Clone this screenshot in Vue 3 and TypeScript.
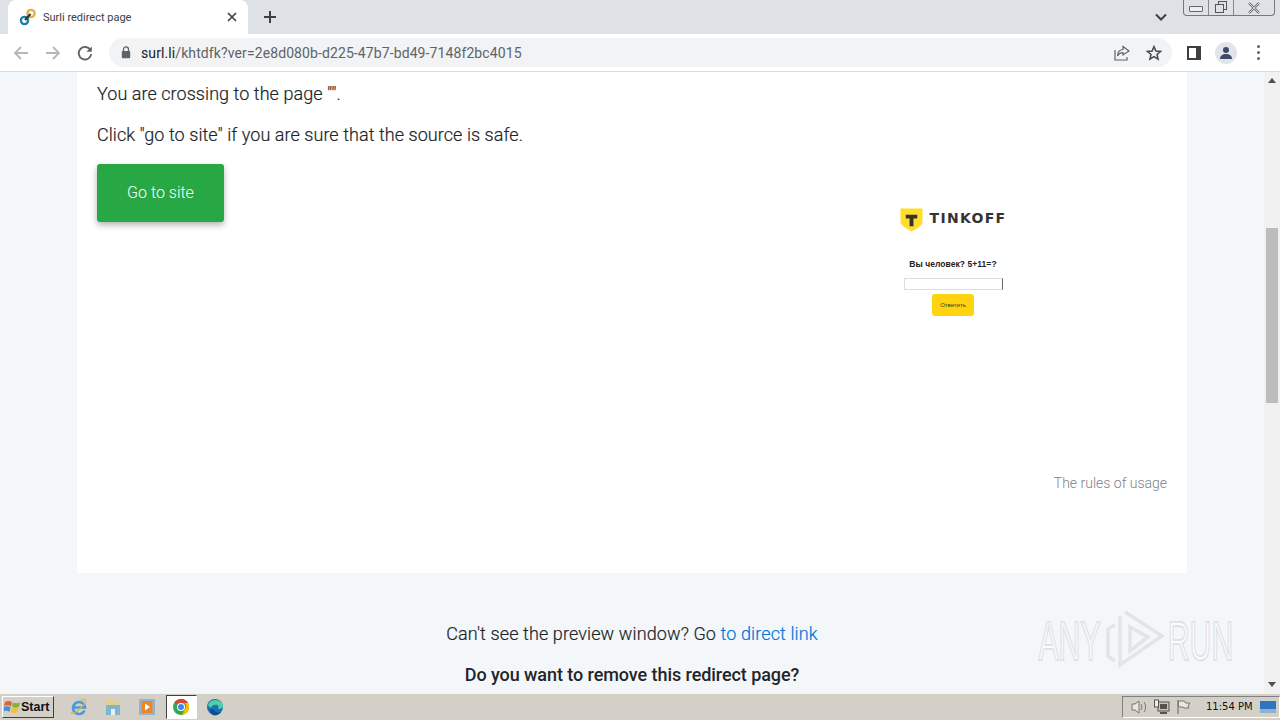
<script setup lang="ts">
const taskIcons = ['ie', 'folder', 'media', 'chrome', 'edge'] as const
</script>

<template>
  <div class="screen">
    <header class="tabstrip">
      <div class="tab">
        <svg class="favicon" width="18" height="18" viewBox="0 0 18 18">
          <circle cx="12" cy="5.500" r="3.600" fill="none" stroke="#e3b23c" stroke-width="2.400" />
          <circle cx="5.500" cy="12.500" r="3.600" fill="none" stroke="#1f7f9c" stroke-width="2.400" />
          <path d="M6 12 11.500 6" stroke="#33363a" stroke-width="2.200" />
        </svg>
        <span class="tab-title">Surli redirect page</span>
        <svg class="tab-close" width="10" height="10" viewBox="0 0 10 10">
          <path d="M1 1l8 8M9 1l-8 8" stroke="#3c4043" stroke-width="1.700" />
        </svg>
      </div>
      <svg class="new-tab" width="14" height="14" viewBox="0 0 14 14">
        <path d="M7 1v12M1 7h12" stroke="#3c4043" stroke-width="2" />
      </svg>
      <div class="strip-spacer"></div>
      <svg class="chevron" width="12" height="8" viewBox="0 0 12 8">
        <path d="M1 1.500l5 5 5-5" fill="none" stroke="#3c4043" stroke-width="2" />
      </svg>
      <div class="win-controls">
        <span class="win-btn win-min"><i></i></span>
        <span class="win-btn win-max">
          <svg width="14" height="13" viewBox="0 0 14 13">
            <rect x="4.500" y="0.500" width="8" height="8" fill="#dee1e6" stroke="#555" />
            <rect x="1.500" y="3.500" width="8" height="8" fill="#dee1e6" stroke="#555" />
          </svg>
        </span>
        <span class="win-btn win-close">
          <svg width="14" height="12" viewBox="0 0 14 12">
            <path d="M2 1l10 10M12 1 2 11" stroke="#666" stroke-width="2.400" />
            <path d="M2 1l10 10M12 1 2 11" stroke="#eceef1" stroke-width="0.900" />
          </svg>
        </span>
      </div>
    </header>

    <nav class="toolbar">
      <svg class="nav-icon" width="16" height="16" viewBox="0 0 16 16">
        <path d="M15 8H2M8 2 2 8l6 6" fill="none" stroke="#b4b7bb" stroke-width="1.800" />
      </svg>
      <svg class="nav-icon" width="16" height="16" viewBox="0 0 16 16">
        <path d="M1 8h13M8 2l6 6-6 6" fill="none" stroke="#b4b7bb" stroke-width="1.800" />
      </svg>
      <svg class="nav-icon" width="16" height="16" viewBox="0 0 16 16">
        <path d="M13.600 5.200A6.300 6.300 0 1 0 14.300 9" fill="none" stroke="#5f6368" stroke-width="1.900" />
        <path d="M14.800 1.400v5.400H9.400z" fill="#5f6368" />
      </svg>
      <div class="omnibox">
        <svg class="lock" width="10" height="13" viewBox="0 0 10 13">
          <path d="M2.500 5V3.400a2.500 2.500 0 0 1 5 0V5" fill="none" stroke="#5f6368" stroke-width="1.300" />
          <rect x="0.800" y="5" width="8.400" height="7.200" rx="1" fill="#5f6368" />
        </svg>
        <span class="url"><b>surl.li</b>/khtdfk?ver=2e8d080b-d225-47b7-bd49-7148f2bc4015</span>
        <svg class="omni-share" width="16" height="16" viewBox="0 0 16 16">
          <path d="M9 1.500 15 6l-6 4V7.600C6 7.600 4.600 9 3.600 11 3.600 7.500 5.500 4.800 9 4.500z" fill="none" stroke="#5f6368" stroke-width="1.200" />
          <path d="M1 5v10h12v-3" fill="none" stroke="#5f6368" stroke-width="1.200" />
        </svg>
        <svg class="omni-star" width="16" height="16" viewBox="0 0 16 16">
          <path d="M8 1.600 9.900 6l4.700.4-3.600 3.100 1.100 4.600L8 11.700l-4.100 2.400L5 9.500 1.400 6.400 6.100 6z" fill="none" stroke="#474a4e" stroke-width="1.500" />
        </svg>
      </div>
      <svg class="side-panel" width="14" height="14" viewBox="0 0 14 14">
        <rect x="1" y="1" width="12" height="12" fill="#fff" stroke="#3c4043" stroke-width="2" />
        <rect x="9" y="1" width="4" height="12" fill="#3c4043" />
      </svg>
      <span class="avatar">
        <svg width="14" height="14" viewBox="0 0 14 14">
          <circle cx="7" cy="4" r="3" fill="#3f4a66" />
          <path d="M1 13c0-3.500 2.700-5 6-5s6 1.500 6 5z" fill="#3f4a66" />
        </svg>
      </span>
      <span class="kebab"><i></i><i></i><i></i></span>
    </nav>

    <div class="viewport">
      <main class="page">
        <section class="card">
          <div class="card-main">
            <div class="card-text">
              <p class="line">You are crossing to the page "".</p>
              <p class="line">Click "go to site" if you are sure that the source is safe.</p>
              <button class="go">Go to site</button>
            </div>
            <div class="captcha">
              <div class="brand">
                <svg width="23" height="24" viewBox="0 0 24 25">
                  <path d="M0.500 0.500h23v13c0 4-3 6.500-11.500 11C4 20 .5 17.500.5 13.500z" fill="#ffdd2d" />
                  <path d="M6 7h12v4h-4v8h-4v-8H6z" fill="#333" />
                </svg>
                <span class="brand-name">TINKOFF</span>
              </div>
              <div class="question">Вы человек? 5+11=?</div>
              <div class="answer"></div>
              <div class="submit">Ответить</div>
            </div>
          </div>
          <a class="rules">The rules of usage</a>
        </section>
        <p class="direct">Can't see the preview window? Go <span class="link">to direct link</span></p>
        <p class="remove">Do you want to remove this redirect page?</p>

        <div class="watermark">
          <span class="wm-text">ANY</span>
          <svg width="60" height="62" viewBox="0 0 60 62">
            <g fill="none" stroke="#e2e5e8" stroke-width="3.500">
              <path d="M10 15 3 19v27l7 5" />
              <path d="M15 6v49l42-29L20 2" />
              <path d="M25 17v24l18-14z" />
            </g>
          </svg>
          <span class="wm-text">RUN</span>
        </div>
      </main>
      <aside class="scrollbar">
        <span class="arrow up"></span>
        <div class="track">
          <div class="thumb"></div>
        </div>
        <span class="arrow down"></span>
      </aside>
    </div>

    <footer class="taskbar">
      <div class="start">
        <svg width="17" height="16" viewBox="0 0 17 16">
          <path d="M1 3c2-1.500 4-1.500 7 0L7 7.500C5 6 3 6 0 7z" fill="#e2622a" />
          <path d="M9 3.500c2.500 1 4.500 1 7 0l-1 4.500c-2.500 1-4.500.8-7-.2z" fill="#82b33d" />
          <path d="M0 8c2.500-1 4.500-1 6.500.3l-1 4.500C3.500 11.500 1.500 11.500-.5 12.500z" fill="#3f8fd6" />
          <path d="M7.500 8.800c2.500 1 4.500 1 7 0l-1 4.500c-2.500 1-4.500.8-7-.3z" fill="#f2c230" />
        </svg>
        <span>Start</span>
      </div>
      <div class="quick">
        <span v-for="icon in taskIcons" :key="icon" class="quick-item" :class="{ active: icon === 'chrome' }">
          <svg v-if="icon === 'ie'" width="18" height="18" viewBox="0 0 18 18">
            <path d="M14.500 12.500A6 6 0 1 1 15 9.500H4" fill="none" stroke="#4a9ad8" stroke-width="2.600" />
            <path d="M2 14C0 17 5 15 10 10.500S17 2 15 1.500c-2-.5-4 1-5 1.500" fill="none" stroke="#d9b447" stroke-width="1.200" />
          </svg>
          <svg v-else-if="icon === 'folder'" width="18" height="18" viewBox="0 0 18 18">
            <path d="M2 2h6l2 2h6v13H2z" fill="#e5cf8c" />
            <rect x="2" y="7" width="14" height="10" fill="#7fb6cf" />
            <rect x="7" y="11" width="4" height="6" fill="#e8eef2" />
          </svg>
          <svg v-else-if="icon === 'media'" width="18" height="18" viewBox="0 0 18 18">
            <rect x="1" y="1" width="16" height="16" fill="#8fb4d6" />
            <rect x="3.500" y="3" width="11" height="12" fill="#e9872a" />
            <path d="M7 5.500v7l5-3.500z" fill="#fff" />
          </svg>
          <svg v-else-if="icon === 'chrome'" width="18" height="18" viewBox="0 0 18 18">
            <circle cx="9" cy="9" r="8" fill="#34a853" />
            <path d="M9 1a8 8 0 0 1 7 4H9a4 4 0 0 0-3.500 2L2.500 4.500A8 8 0 0 1 9 1z" fill="#db4437" />
            <path d="M16 5a8 8 0 0 1-6 12l3-6a4 4 0 0 0-.5-6z" fill="#fbbc05" />
            <circle cx="9" cy="9" r="4" fill="#fff" />
            <circle cx="9" cy="9" r="3" fill="#4285f4" />
          </svg>
          <svg v-else width="18" height="18" viewBox="0 0 18 18">
            <circle cx="9" cy="9" r="8" fill="#1a6fb5" />
            <path d="M2 7c2-6 12-7 15 0 .5 3-2 4-5 4 2-3-1-5-4-4-2 .7-3 2-3 3C3.500 9 2.500 8 2 7z" fill="#4fd0a5" />
            <path d="M8 12c1 2 4 3 7 2-2 3-6 4-8 3-2-1-3-3-3-6 1 0 3 0 4 1z" fill="#0f4f8f" />
          </svg>
        </span>
      </div>
      <div class="task-spacer"></div>
      <div class="tray">
        <svg width="18" height="16" viewBox="0 0 18 16">
          <path d="M2 5h3l4-3v12l-4-3H2z" fill="#e9e6df" stroke="#77746c" />
          <path d="M11 5c1 2 1 4 0 6M14 3c2 3 2 7 0 10" fill="none" stroke="#77746c" />
        </svg>
        <svg width="18" height="16" viewBox="0 0 18 16">
          <rect x="5" y="3" width="11" height="9" fill="#c9c6bd" stroke="#55534c" />
          <rect x="7" y="5" width="7" height="5" fill="#55534c" />
          <rect x="1.500" y="1" width="4" height="7" fill="#eee" stroke="#55534c" />
          <path d="M7 14h7" stroke="#55534c" stroke-width="2" />
        </svg>
        <svg width="16" height="16" viewBox="0 0 16 16">
          <path d="M2 1v14" stroke="#77746c" stroke-width="1.200" />
          <path d="M2.500 2h6l1 2H14l-2 3 1 2H8L7 8H2.500z" fill="#e9e6df" stroke="#77746c" />
        </svg>
        <span class="clock">11:54 PM</span>
        <svg class="show-desktop" width="16" height="12" viewBox="0 0 16 12">
          <rect width="16" height="12" fill="#2f74c0" />
          <rect y="8" width="16" height="4" fill="#8fb2cf" />
        </svg>
      </div>
    </footer>
  </div>
</template>

<style scoped>
.screen {
  width: 1280px;
  height: 720px;
  display: flex;
  flex-direction: column;
  overflow: hidden;
  font-family: Roboto, "Liberation Sans", sans-serif;
  color: #212529;
}

/* tab strip */
.tabstrip {
  height: 34px;
  flex: none;
  display: flex;
  align-items: flex-start;
  background: #dee1e6;
  padding-left: 8px;
}
.tab {
  width: 240px;
  height: 34px;
  background: #fff;
  border-radius: 8px 8px 0 0;
  display: flex;
  align-items: center;
  padding: 0 11px 0 11px;
  box-sizing: border-box;
}
.favicon { flex: none; }
.tab-title {
  margin-left: 6px;
  flex: 1;
  font-size: 11px;
  color: #3c4043;
}
.new-tab { margin: 10px 0 0 15px; }
.strip-spacer { flex: 1; }
.chevron { margin: 13px 16px 0 0; }
.win-controls {
  display: flex;
  height: 16px;
  margin-right: 5px;
  border: 1px solid #777;
  border-top: 0;
  border-radius: 0 0 4px 4px;
  box-sizing: border-box;
}
.win-btn {
  display: flex;
  align-items: center;
  justify-content: center;
  height: 100%;
  box-sizing: border-box;
  border-right: 1px solid #888;
}
.win-min { width: 25px; }
.win-min i {
  width: 12px;
  height: 4px;
  margin-top: 3px;
  border: 1px solid #666;
  border-radius: 1px;
  background: #eceef1;
}
.win-max { width: 25px; }
.win-close { width: 40px; border-right: 0; }

/* toolbar */
.toolbar {
  height: 38px;
  flex: none;
  box-sizing: border-box;
  display: flex;
  align-items: center;
  background: #fff;
  border-bottom: 1px solid #dadce0;
  padding: 0 0 0 13px;
}
.nav-icon { margin-right: 16px; }
.omnibox {
  width: 1063px;
  height: 29px;
  box-sizing: border-box;
  display: flex;
  align-items: center;
  background: #f1f3f4;
  border-radius: 15px;
  padding: 0 10px 0 12px;
}
.lock { flex: none; }
.url {
  flex: 1;
  margin-left: 10px;
  font-size: 14px;
  letter-spacing: 0.1px;
  color: #5f6368;
}
.url b { font-weight: 400; color: #202124; }
.omni-share { margin-right: 16px; }
.side-panel { margin-left: 15px; }
.avatar {
  width: 22px;
  height: 22px;
  margin-left: 14px;
  border-radius: 50%;
  background: #e1e4e9;
  display: flex;
  align-items: center;
  justify-content: center;
}
.kebab {
  margin-left: 20px;
  display: flex;
  flex-direction: column;
  gap: 3px;
}
.kebab i {
  width: 3px;
  height: 3px;
  border-radius: 50%;
  background: #5f6368;
}

/* page */
.viewport {
  flex: 1;
  min-height: 0;
  display: flex;
}
.page {
  position: relative;
  flex: 1;
  min-width: 0;
  overflow: hidden;
  background: #f4f7fa;
  padding: 0 0 0 77px;
  box-sizing: border-box;
}
.card {
  width: 1110px;
  height: 501px;
  background: #fff;
  box-sizing: border-box;
  padding: 11px 20px 0;
  display: flex;
  flex-direction: column;
}
.card-main {
  flex: 1;
  display: flex;
  justify-content: space-between;
}
.line {
  margin: 0 0 20px;
  font-size: 18px;
  line-height: 21px;
  font-weight: 300;
  letter-spacing: 0.055px;
  color: #212529;
  -webkit-text-stroke: 0.2px #212529;
}
.go {
  display: block;
  width: 127px;
  height: 58px;
  margin-top: -1px;
  padding: 0 0 2px;
  border: 0;
  border-radius: 3px;
  background: #28a745;
  color: #fff;
  font: 300 16px Roboto, sans-serif;
  box-shadow: 0 3px 6px rgba(0, 0, 0, 0.3);
}
.captcha {
  width: 108px;
  margin: 124px 160px 0 0;
  display: flex;
  flex-direction: column;
  align-items: center;
}
.brand {
  display: flex;
  align-items: center;
  gap: 7px;
  height: 25px;
  white-space: nowrap;
}
.brand-name {
  margin-bottom: 3px;
  font: 700 14px "DejaVu Sans", sans-serif;
  letter-spacing: 1.300px;
  color: #333;
}
.question {
  margin-top: 27px;
  font: 700 8.500px "Liberation Sans", Arial, sans-serif;
  letter-spacing: 0.05px;
  color: #222;
  white-space: nowrap;
}
.answer {
  width: 99px;
  height: 12px;
  margin-top: 9px;
  flex: none;
  box-sizing: border-box;
  border: 1px solid #ddd;
  border-right: 1px solid #666;
}
.submit {
  width: 42px;
  height: 22px;
  margin-top: 4px;
  flex: none;
  border-radius: 3px;
  background: #ffd30f;
  font: 400 6px/22px "Liberation Sans", Arial, sans-serif;
  text-align: center;
  color: #333;
}
.rules {
  align-self: flex-end;
  margin-bottom: 82px;
  font-size: 14px;
  line-height: 16px;
  font-weight: 300;
  color: #7d8288;
}
.direct,
.remove {
  width: 1110px;
  margin: 0;
  text-align: center;
  font-size: 18px;
  line-height: 21px;
  color: #212529;
}
.direct {
  margin-top: 50px;
  font-weight: 300;
  letter-spacing: 0.11px;
  -webkit-text-stroke: 0.2px currentColor;
}
.remove { margin-top: 20px; font-weight: 500; letter-spacing: -0.07px; }
.link { color: #0275d8; }

.watermark {
  position: absolute;
  left: 1037px;
  top: 538px;
  display: flex;
  align-items: center;
  gap: 3px;
  height: 62px;
  pointer-events: none;
}
.wm-text {
  flex: none;
  width: 65px;
  display: flex;
  justify-content: center;
  white-space: nowrap;
  font: 400 56px/1 "Liberation Sans", sans-serif;
  color: #fbfcfd;
  -webkit-text-stroke: 2px #dfe3e6;
  transform: scaleX(0.54);
}

/* scrollbar */
.scrollbar {
  width: 16px;
  flex: none;
  display: flex;
  flex-direction: column;
  align-items: center;
  background: #f1f1f1;
}
.track {
  flex: 1;
  width: 100%;
  padding-top: 139px;
  box-sizing: border-box;
}
.thumb {
  height: 175px;
  margin: 0 2px;
  background: #bcbcbc;
}
.arrow {
  flex: none;
  width: 0;
  height: 0;
  margin: 6px 0;
  border-left: 4px solid transparent;
  border-right: 4px solid transparent;
}
.arrow.up { border-bottom: 5px solid #505050; }
.arrow.down { border-top: 5px solid #505050; }

/* taskbar */
.taskbar {
  height: 27px;
  flex: none;
  box-sizing: border-box;
  display: flex;
  align-items: center;
  background: #d4d0c8;
  border-top: 1px solid #f3f1ec;
  padding: 0 0 1px 2px;
}
.start {
  width: 52px;
  height: 22px;
  box-sizing: border-box;
  display: flex;
  align-items: center;
  padding-left: 1px;
  border: 1px solid;
  border-color: #fff #404040 #404040 #fff;
  font: 700 12.500px "Liberation Sans", sans-serif;
  color: #111;
}
.start svg { flex: none; }
.quick {
  display: flex;
  align-items: center;
  margin-left: 8px;
}
.quick-item {
  width: 34px;
  height: 24px;
  display: flex;
  align-items: center;
  justify-content: center;
}
.quick-item.active {
  width: 31px;
  margin: 0 1.500px;
  box-sizing: border-box;
  background: #fff;
  border: 1px solid;
  border-color: #404040 #fff #fff #404040;
}
.task-spacer { flex: 1; }
.tray {
  height: 22px;
  width: 158px;
  box-sizing: border-box;
  display: flex;
  align-items: center;
  gap: 5px;
  padding-left: 7px;
  border: 1px solid;
  border-color: #808080 #fff #fff #808080;
}
.clock {
  margin-left: 9px;
  font: 400 10px "DejaVu Sans", sans-serif;
  color: #111;
  white-space: nowrap;
}
.show-desktop { margin-left: 2px; flex: none; }
</style>
